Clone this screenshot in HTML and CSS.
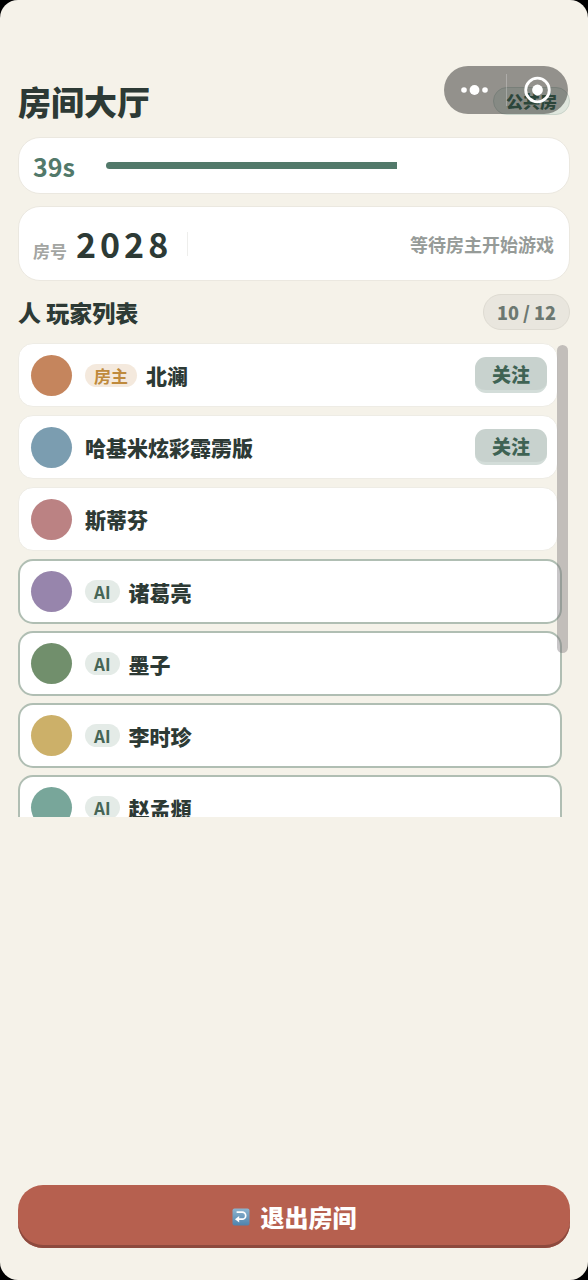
FILE: index.html
```html
<!DOCTYPE html>
<html lang="zh-CN">
<head>
<meta charset="utf-8">
<meta name="viewport" content="width=device-width, initial-scale=1">
<title>房间大厅</title>
<link rel="stylesheet" href="styles.css">
</head>
<body>
<div class="page">
  <div class="capsule">
    <button class="capsule-btn" type="button" aria-label="更多">
      <svg width="28" height="12" viewBox="0 0 28 12" fill="#fff"><circle cx="3" cy="6" r="2.8"/><circle cx="13.5" cy="6" r="4.9"/><circle cx="24" cy="6" r="2.8"/></svg>
    </button>
    <button class="capsule-btn" type="button" aria-label="关闭">
      <svg width="28" height="28" viewBox="0 0 28 28"><circle cx="14.5" cy="14" r="11.8" fill="none" stroke="#fff" stroke-width="2.8"/><circle cx="14.5" cy="14" r="5.4" fill="#fff"/></svg>
    </button>
  </div>

  <header class="header">
    <h1 class="title">房间大厅</h1>
    <span class="visibility">公共房</span>
  </header>

  <main class="content">
    <section class="card timer">
      <span class="timer-value">39s</span>
      <div class="timer-track" role="progressbar" aria-label="倒计时" aria-valuemin="0" aria-valuemax="60" aria-valuenow="39">
        <div class="timer-fill" style="width: 65%"></div>
      </div>
    </section>

    <section class="card room">
      <div class="room-id">
        <span class="room-label">房号</span>
        <span class="room-number">2028</span>
      </div>
      <span class="room-divider"></span>
      <span class="room-status">等待房主开始游戏</span>
    </section>

    <section class="players">
      <div class="players-head">
        <h2 class="players-title">人 玩家列表</h2>
        <span class="players-count">10 / 12</span>
      </div>
      <div class="players-box">
        <ul class="players-list">
          <li class="player"><span class="avatar orange"></span><span class="tag host">房主</span><span class="name">北澜</span><button class="follow" type="button">关注</button></li>
          <li class="player"><span class="avatar blue"></span><span class="name">哈基米炫彩霹雳版</span><button class="follow" type="button">关注</button></li>
          <li class="player"><span class="avatar rose"></span><span class="name">斯蒂芬</span></li>
          <li class="player ai"><span class="avatar purple"></span><span class="tag">AI</span><span class="name">诸葛亮</span></li>
          <li class="player ai"><span class="avatar green"></span><span class="tag">AI</span><span class="name">墨子</span></li>
          <li class="player ai"><span class="avatar gold"></span><span class="tag">AI</span><span class="name">李时珍</span></li>
          <li class="player ai"><span class="avatar teal"></span><span class="tag">AI</span><span class="name">赵孟頫</span></li>
        </ul>
        <span class="scroll-thumb"></span>
      </div>
    </section>
  </main>

  <button class="exit" type="button">
    <svg width="18" height="18" viewBox="0 0 18 18" aria-hidden="true">
      <defs><linearGradient id="tile" x1="0" y1="0" x2="0" y2="1"><stop offset="0" stop-color="#8db4cf"/><stop offset="1" stop-color="#4f83ad"/></linearGradient></defs>
      <rect x=".5" y=".5" width="17" height="17" rx="2" fill="url(#tile)"/>
      <path d="M4.6 4.2h5.6a3.5 3.5 0 0 1 0 7H6" fill="none" stroke="#fff" stroke-width="1.7"/>
      <path d="M3 11.2l4.2-3.2v6.4z" fill="#fff"/>
    </svg>
    <span>退出房间</span>
  </button>
</div>
</body>
</html>
```
FILE: styles.css
```css
* {
  box-sizing: border-box;
}

html {
  background: #000;
}

body {
  margin: 0;
  color: #2d3a35;
  font-family: "Noto Sans CJK SC", "Noto Sans", sans-serif;
  font-weight: 700;
}

button {
  border: 0;
  padding: 0;
  font: inherit;
  cursor: pointer;
}

h1,
h2,
ul {
  margin: 0;
  padding: 0;
  font-size: inherit;
  list-style: none;
}

.page {
  position: relative;
  display: flex;
  flex-direction: column;
  min-height: 100vh;
  padding: 82px 18px 32px;
  border-radius: 18px;
  background: #f5f2e9;
}

/* Host app menu, floating over the page */
.capsule {
  position: absolute;
  z-index: 2;
  top: 66px;
  right: 20px;
  display: flex;
  width: 124px;
  height: 48px;
  border-radius: 24px;
  background: rgba(0, 0, 0, 0.4);
}

.capsule-btn {
  display: grid;
  flex: 1;
  place-items: center;
  background: none;
}

.capsule::after {
  position: absolute;
  top: 8px;
  left: 50%;
  width: 1px;
  height: 32px;
  background: rgba(255, 255, 255, 0.25);
  content: "";
}

.header {
  display: flex;
  align-items: center;
  justify-content: space-between;
  height: 38px;
  margin-bottom: 17px;
}

.title {
  font-size: 33px;
  font-weight: 900;
  line-height: 40px;
}

.visibility {
  padding: 0 12px;
  border: 1px solid #c9d4ca;
  border-radius: 14px;
  background: #dfe6dd;
  color: #4a7562;
  font-size: 17px;
  font-weight: 900;
  line-height: 26px;
}

.content {
  display: flex;
  flex-direction: column;
  gap: 12px;
}

.card {
  display: flex;
  align-items: center;
  padding: 0 15px 0 14px;
  border: 1px solid #ebe8e0;
  border-radius: 22px;
  background: #fff;
}

.timer {
  gap: 13px;
  min-height: 57px;
}

.timer-value {
  min-width: 60px;
  color: #52796a;
  font-size: 25px;
  line-height: 32px;
}

.timer-track {
  flex: 1;
  overflow: hidden;
  height: 7px;
  border-radius: 4px;
}

.timer-fill {
  height: 100%;
  background: #52796a;
}

.room {
  min-height: 75px;
}

.room-id {
  display: flex;
  align-items: baseline;
  gap: 9px;
}

.room-label {
  color: #a3a5a2;
  font-size: 17px;
}

.room-number {
  font-size: 34px;
  letter-spacing: 4px;
  line-height: 40px;
}

.room-divider {
  width: 1px;
  height: 24px;
  margin-left: 15px;
  background: #eeeeec;
}

.room-status {
  margin-left: auto;
  color: #969b98;
  font-size: 18px;
}

.players-head {
  display: flex;
  align-items: center;
  justify-content: space-between;
  height: 38px;
  margin-bottom: 12px;
}

.players-title {
  font-size: 23px;
  font-weight: 900;
  line-height: 38px;
}

.players-count {
  padding: 0 13px;
  border: 1px solid #dedbd2;
  border-radius: 18px;
  background: #e9e6de;
  color: #6c7871;
  font-size: 18px;
  font-weight: 900;
  line-height: 34px;
}

.players-box {
  position: relative;
}

.players-list {
  display: flex;
  flex-direction: column;
  gap: 8px;
  overflow-y: auto;
  max-height: 37vh;
  padding-right: 8px;
  scrollbar-width: none;
}

.player {
  display: flex;
  flex: none;
  align-items: center;
  height: 64px;
  margin-right: 4px;
  padding: 0 10px 0 12px;
  border: 1px solid #eeece5;
  border-radius: 15px;
  background: #fff;
}

.player.ai {
  height: 65px;
  margin-right: 0;
  margin-bottom: -1px;
  padding: 0 11px;
  border: 2px solid #b0beb3;
}

.scroll-thumb {
  position: absolute;
  top: 2px;
  right: 2px;
  width: 11px;
  height: 65%;
  border-radius: 6px;
  background: rgba(110, 104, 110, 0.38);
}

.avatar {
  width: 41px;
  height: 41px;
  margin-right: 13px;
  border-radius: 50%;
}

.orange { background: #c5855d; }
.blue { background: #7b9db0; }
.rose { background: #bb8283; }
.purple { background: #9785ac; }
.green { background: #718f6c; }
.gold { background: #ccb069; }
.teal { background: #78a69a; }

.tag {
  margin-right: 9px;
  padding: 0 9px;
  border-radius: 12px;
  background: #e4ebe7;
  color: #466556;
  font-size: 17px;
  line-height: 23px;
}

.tag.host {
  background: #f4e9dd;
  color: #bf8a3c;
}

.name {
  font-size: 21px;
  font-weight: 900;
  line-height: 30px;
}

.follow {
  width: 72px;
  height: 36px;
  margin-left: auto;
  border-bottom: 3px solid #d3ddd9;
  border-radius: 11px;
  background: #c8d2ce;
  color: #3f6354;
  font-size: 19px;
  font-weight: 900;
  line-height: 32px;
}

.exit {
  display: flex;
  align-items: center;
  justify-content: center;
  gap: 11px;
  height: 63px;
  margin-top: auto;
  border-radius: 25px;
  background: #b6604f;
  box-shadow: inset 0 -3px #8d4a3e;
  color: #fff;
  font-size: 24px;
  font-weight: 900;
}
```
